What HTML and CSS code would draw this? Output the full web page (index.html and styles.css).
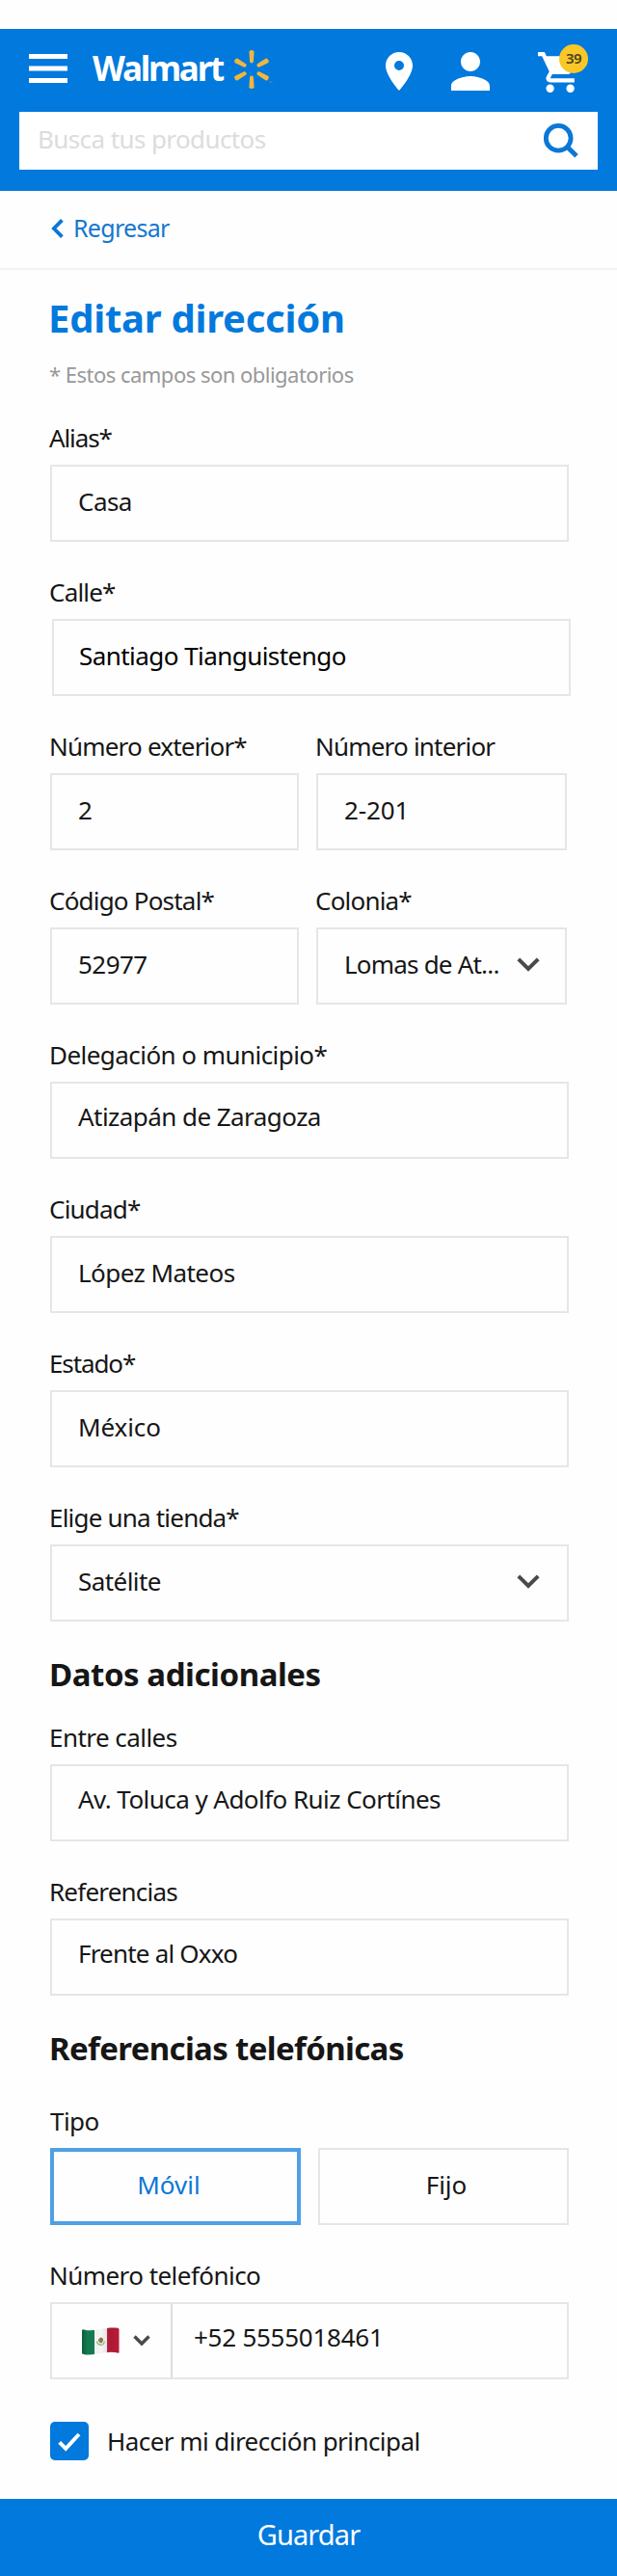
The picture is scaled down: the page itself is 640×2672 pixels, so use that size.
FILE: index.html
```
<!DOCTYPE html>
<html lang="es">
<head>
<meta charset="utf-8">
<title>Editar dirección</title>
<link rel="stylesheet" href="styles.css">
</head>
<body>
<header class="header">
  <div class="topbar">
    <svg class="menu" width="40" height="30" viewBox="0 0 40 30" fill="#fff"><path d="M0 0h40v5H0zM0 12.5h40v5H0zM0 25h40v5H0z"/></svg>
    <span class="brand">Walmart</span>
    <svg class="spark" width="42" height="40" viewBox="-18 -20 42 40" fill="#efb73e">
      <path id="ray" d="M-2.6-18.2Q-2.6-20 0-20Q2.6-20 2.6-18.2L1.9-8Q1.7-6.6 0-6.6Q-1.7-6.6-1.9-8Z"/>
      <use href="#ray" transform="rotate(60)"/><use href="#ray" transform="rotate(120)"/><use href="#ray" transform="rotate(180)"/><use href="#ray" transform="rotate(240)"/><use href="#ray" transform="rotate(300)"/>
      <path d="M18.500 12.500h3v1h-3z" opacity=".4"/>
    </svg>
    <svg class="pin" width="28" height="40" viewBox="5 2 14 20" fill="#fff"><path d="M12 2C8.130 2 5 5.130 5 9c0 5.250 7 13 7 13s7-7.750 7-13c0-3.870-3.130-7-7-7zm0 9.500a2.500 2.500 0 1 1 0-5 2.500 2.500 0 0 1 0 5z"/></svg>
    <svg class="user" width="40" height="40" viewBox="4 4 16 16" fill="#fff"><path d="M12 12c2.210 0 4-1.790 4-4s-1.790-4-4-4-4 1.790-4 4 1.790 4 4 4zm0 2c-2.670 0-8 1.340-8 4v2h16v-2c0-2.660-5.330-4-8-4z"/></svg>
    <div class="cart">
      <svg width="42" height="42" viewBox="1 2 20 20" fill="#fff"><path d="M7 18a2 2 0 1 0 0 4 2 2 0 0 0 0-4zM1 2v2h2l3.600 7.590-1.350 2.450c-.16.28-.25.61-.25.96 0 1.100.9 2 2 2h12v-2H7.420c-.14 0-.25-.11-.25-.25l.03-.12.9-1.630h7.450c.75 0 1.410-.41 1.750-1.030l3.580-6.490c.08-.14.12-.31.12-.48 0-.55-.45-1-1-1H5.210l-.94-2H1zm16 16a2 2 0 1 0 0 4 2 2 0 0 0 0-4z"/></svg>
      <span class="badge">39</span>
    </div>
  </div>
  <div class="search">
    <span class="placeholder">Busca tus productos</span>
    <svg width="36" height="36" viewBox="0 0 36 36" fill="none" stroke="#0b77d6" stroke-width="4.800"><circle cx="15.200" cy="15.300" r="12.900"/><path d="M24.500 24.500L34 33.800" stroke-width="5"/></svg>
  </div>
</header>

<nav class="back">
  <svg width="13" height="20" viewBox="0 0 13 20" fill="none" stroke="#0b77d6" stroke-width="3.800"><path d="M11.400 1.300L2.900 10l8.500 8.700"/></svg>
  <a class="back-link">Regresar</a>
</nav>

<main class="form">
  <h1 class="title">Editar dirección</h1>
  <p class="note">* Estos campos son obligatorios</p>

  <div class="field"><div class="label tighter">Alias*</div><div class="box">Casa</div></div>
  <div class="field"><div class="label tight">Calle*</div><div class="box shifted">Santiago Tianguistengo</div></div>
  <div class="row">
    <div class="field"><div class="label tight">Número exterior*</div><div class="box">2</div></div>
    <div class="field"><div class="label tight">Número interior</div><div class="box loose">2-201</div></div>
  </div>
  <div class="row">
    <div class="field"><div class="label tight">Código Postal*</div><div class="box">52977</div></div>
    <div class="field"><div class="label tight">Colonia*</div><div class="box select tight">Lomas de At...<svg class="chevron" width="24" height="15" viewBox="0 0 24 15"><path d="M1.800 1.800L12 12l10.200-10.200"/></svg></div></div>
  </div>
  <div class="field"><div class="label">Delegación o municipio*</div><div class="box raised">Atizapán de Zaragoza</div></div>
  <div class="field"><div class="label tight">Ciudad*</div><div class="box">López Mateos</div></div>
  <div class="field"><div class="label tighter">Estado*</div><div class="box loose">México</div></div>
  <div class="field"><div class="label tight">Elige una tienda*</div><div class="box select">Satélite<svg class="chevron" width="24" height="15" viewBox="0 0 24 15"><path d="M1.800 1.800L12 12l10.200-10.200"/></svg></div></div>

  <h2 class="section">Datos adicionales</h2>
  <div class="field"><div class="label">Entre calles</div><div class="box raised">Av. Toluca y Adolfo Ruiz Cortínes</div></div>
  <div class="field"><div class="label tight">Referencias</div><div class="box raised tight">Frente al Oxxo</div></div>

  <h2 class="section phone-section">Referencias telefónicas</h2>
  <div class="field">
    <div class="label type-label">Tipo</div>
    <div class="options"><div class="option active">Móvil</div><div class="option">Fijo</div></div>
  </div>
  <div class="field">
    <div class="label">Número telefónico</div>
    <div class="phone">
      <div class="country">
        <svg width="39" height="29" viewBox="0 0 39 29">
          <defs>
            <clipPath id="wave"><path d="M0 3Q.5 2 2 2.400C14 5.500 23-.8 37 .8Q38.500 1 38.500 2.500V26Q38.500 27 37 26.600C25 23.500 14 30.500 1.500 28Q0 27.600 0 26.500Z"/></clipPath>
            <linearGradient id="shade"><stop offset="0" stop-opacity=".25"/><stop offset=".15" stop-opacity="0"/><stop offset=".5" stop-color="#fff" stop-opacity=".08"/><stop offset=".75" stop-opacity=".12"/><stop offset="1" stop-opacity=".04"/></linearGradient>
          </defs>
          <g clip-path="url(#wave)">
            <path fill="#147a50" d="M0 0h13v29H0z"/><path fill="#f5f5f4" d="M13 0h13v29H13z"/><path fill="#c31c3a" d="M26 0h13v29H26z"/>
            <path fill="url(#shade)" d="M0 0h39v29H0z"/>
          </g>
          <path d="M15.500 14.500q1 4 4.500 3.800 3-.3 3.300-3.800" fill="none" stroke="#92b27c" stroke-width="1.300"/>
          <path d="M17 14q0-3 3-3.500 2.500.5 2 3.500l-1.500 2.500-2-.5z" fill="#9a7140"/><circle cx="19" cy="14" r="1" fill="#4d9b8c"/>
        </svg>
        <svg class="chevron" width="18" height="12" viewBox="0 0 18 12"><path d="M1.500 1.500L9 9l7.500-7.500"/></svg>
      </div>
      <div class="number">+52 5555018461</div>
    </div>
  </div>
  <div class="check-row">
    <span class="checkbox"><svg width="24" height="20" viewBox="0 0 24 20" fill="none" stroke="#fff" stroke-width="4"><path d="M1.700 10.300l6.500 6.500L22 2"/></svg></span>
    <span class="check-text">Hacer mi dirección principal</span>
  </div>
</main>
<div class="save">Guardar</div>
</body>
</html>
```
FILE: styles.css
```
* { box-sizing: border-box; }
body {
  margin: 0;
  padding-top: 30px;
  width: 640px;
  background: #fefefe;
  color: #161616;
  font: 26px/32px "Noto Sans", "Open Sans", sans-serif;
  letter-spacing: -0.55px;
}
svg { display: block; flex: none; }

.header { height: 168px; padding: 0 20px; background: #0279dd; }
.topbar { display: flex; align-items: flex-start; height: 86px; padding: 0 10px; }
.menu { margin-top: 26px; }
.brand {
  width: 147px;
  margin: 21px 0 0 26px;
  color: #fff;
  font-size: 35px;
  font-weight: 700;
  line-height: 40px;
  letter-spacing: -2.2px;
}
.spark { margin-top: 22px; }
.pin { margin: 24px 0 0 115px; }
.user { margin: 24px 0 0 40px; }
.cart { position: relative; margin: 24px 0 0 50px; }
.badge {
  position: absolute;
  top: -8px;
  left: 22px;
  width: 30px;
  height: 30px;
  border-radius: 50%;
  background: #f9c728;
  color: #4c4222;
  font-size: 15px;
  font-weight: 600;
  line-height: 29px;
  letter-spacing: -0.5px;
  text-align: center;
}
.search {
  display: flex;
  align-items: center;
  justify-content: space-between;
  height: 60px;
  padding: 0 20px 0 19px;
  background: #fff;
}
.placeholder { padding-bottom: 4px; color: #dcdcdc; letter-spacing: -0.6px; }

.back {
  display: flex;
  align-items: center;
  gap: 10px;
  height: 82px;
  padding: 0 0 3px 53px;
  border-bottom: 2px solid #f3f3f3;
}
.back-link { padding-bottom: 2px; color: #1377cf; font-size: 25px; letter-spacing: -0.7px; }

.form { padding: 26px 50px 0 52px; }
.title {
  margin: 0 0 20px -2px;
  color: #0279dd;
  font-size: 40px;
  line-height: 48px;
  letter-spacing: -0.25px;
}
.note { margin: 0 0 36px -1px; color: #989898; font-size: 22px; line-height: 28px; letter-spacing: -0.52px; }

.field { margin-bottom: 36px; }
.label { margin: 0 0 12px -1px; }
.tight { letter-spacing: -0.8px; }
.tighter { letter-spacing: -1.1px; }
.loose { letter-spacing: -0.1px; }
.box {
  display: flex;
  align-items: center;
  height: 80px;
  padding: 0 0 4px 27px;
  border: 2px solid #e6e6e6;
}
.raised { padding-bottom: 8px; }
.shifted { width: 538px; margin-left: 2px; padding-left: 26px; color: #000; }
.select { justify-content: space-between; padding-right: 28px; }
.chevron { fill: none; stroke: #4a4a4a; stroke-width: 4; }
.row { display: grid; grid-template-columns: 258px 260px; gap: 18px; }
.row .select { padding-right: 26px; }

.section { margin: -1px 0 29px -1px; font-size: 33px; line-height: 40px; letter-spacing: -0.45px; }
.phone-section { margin-bottom: 39px; letter-spacing: -0.65px; }
.type-label { margin-left: 0; }
.options { display: grid; grid-template-columns: 260px 260px; gap: 18px; }
.option {
  display: flex;
  align-items: center;
  justify-content: center;
  height: 80px;
  padding: 0 0 4px 6px;
  border: 2px solid #e6e6e6;
  letter-spacing: 0;
}
.active { padding: 0 14px 4px 0; border: 4px solid #4fa0e5; color: #0b77d6; }

.phone { display: flex; height: 80px; border: 2px solid #e6e6e6; }
.country {
  display: flex;
  align-items: center;
  gap: 14px;
  width: 125px;
  padding-left: 31px;
  border-right: 2px solid #dedede;
}
.country .chevron { stroke-width: 3.4; }
.number { padding: 18px 0 0 22px; letter-spacing: -0.25px; }

.check-row { display: flex; align-items: center; gap: 19px; margin: 44px 0 40px; height: 40px; }
.checkbox {
  display: flex;
  align-items: center;
  justify-content: center;
  width: 40px;
  height: 40px;
  border-radius: 5px;
  background: #0279dd;
}
.checkbox svg { margin-top: 2px; }

.save {
  height: 80px;
  padding-bottom: 7px;
  background: #0279dd;
  color: #fff;
  font-size: 29px;
  line-height: 73px;
  letter-spacing: -0.9px;
  text-align: center;
}
```
